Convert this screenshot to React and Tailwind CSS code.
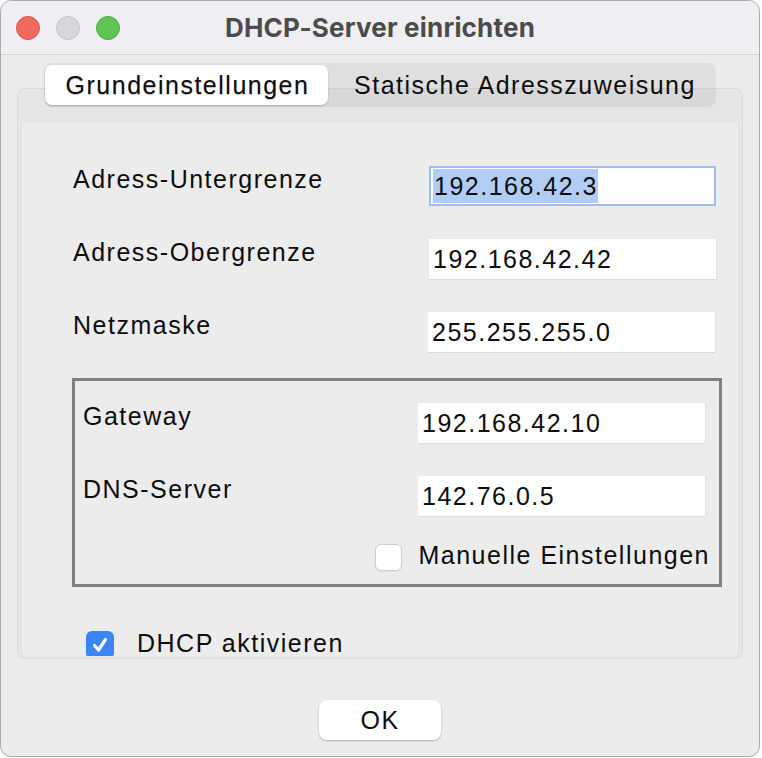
import React from "react"

const body = "font-['Liberation_Sans',Arial,sans-serif] text-[25px] leading-[28px] tracking-[1.5px] text-[#0d0d0d]"

function Light({ color }) {
    return <span className={"block h-[24px] w-[24px] rounded-full border " + color} />
}

function Field({ value, focused }) {
    return (
        <div
            className={
                "flex h-[40px] w-[287px] flex-none items-center bg-white " +
                (focused
                    ? "border-2 border-[#9ebfee] pl-[2px]"
                    : "pl-[4px] shadow-[0_1px_0_#d9d9d9,1px_0_0_#e2e2e2]")
            }
        >
            {focused ? (
                <span className="h-[34px] bg-[#b1cdf6] pl-[1px] leading-[34px]">{value}</span>
            ) : (
                <span>{value}</span>
            )}
        </div>
    )
}

function Row({ label, children, labelWidth }) {
    return (
        <div className="flex flex-none items-start">
            <div className={"-mt-[1px] " + labelWidth}>{label}</div>
            {children}
        </div>
    )
}

function Check({ checked }) {
    if (checked)
        return (
            <span className="flex h-[28px] w-[28px] flex-none items-center justify-center rounded-[6px] bg-[#3a86f6]">
                <svg width="18" height="18" viewBox="0 0 18 18">
                    <path d="M3.5 9.5 L7.5 14 L14.5 3.5" fill="none" stroke="white" strokeWidth="3.2" strokeLinecap="round" strokeLinejoin="round" />
                </svg>
            </span>
        )
    return <span className="block h-[27px] w-[27px] flex-none rounded-[6px] border border-[#cdcdcd] bg-white shadow-[0_1px_1px_rgba(0,0,0,0.06)]" />
}

export default function App() {
    return (
        <div className="h-[758px] w-[762px] bg-white">
            <div className="flex h-[757px] w-[760px] flex-col overflow-hidden rounded-[11px] border border-[#adadad] bg-[#ececec]">
                {/* title bar */}
                <div className="grid h-[54px] flex-none grid-cols-[1fr_auto_1fr] items-center border-b border-[#d4d4d4] bg-[#efeef2]">
                    <div className="flex gap-[16px] pl-[15px]">
                        <Light color="bg-[#ee6a5e] border-[#d6564b]" />
                        <Light color="bg-[#d7d6db] border-[#c3c2c7]" />
                        <Light color="bg-[#5fc453] border-[#4caa40]" />
                    </div>
                    <div className="-mt-[1px] font-['Inter',sans-serif] text-[26px] font-bold tracking-[0.2px] text-[#4b4b4b]">
                        DHCP-Server einrichten
                    </div>
                    <div />
                </div>

                {/* tabs */}
                <div className={"relative z-10 mt-[8px] flex h-[44px] w-[672px] flex-none self-center rounded-[8px] bg-black/[0.055] p-[2px] pl-[1px] " + body}>
                    <div className="flex w-[283px] items-center justify-center rounded-[7px] bg-white pl-[2px] shadow-[0_1px_2px_rgba(0,0,0,0.22)] [text-shadow:0_1px_1px_rgba(0,0,0,0.25)]">
                        Grundeinstellungen
                    </div>
                    <div className="flex flex-1 items-center justify-center pl-[8px]">Statische Adresszuweisung</div>
                </div>

                {/* pane */}
                <div className="mx-[16px] -mt-[19px] flex h-[571px] flex-none flex-col rounded-[7px] border border-[#dadada] bg-[#e5e5e5] px-[4px] pb-[2px] pt-[33px]">
                    <div className={"flex flex-1 flex-col overflow-hidden rounded-b-[5px] bg-[#ececec] pl-[51px] pt-[44px] " + body}>
                        <div className="flex flex-none flex-col gap-[33px]">
                            <Row label="Adress-Untergrenze" labelWidth="w-[356px]">
                                <Field value="192.168.42.3" focused />
                            </Row>
                            <Row label="Adress-Obergrenze" labelWidth="w-[356px]">
                                <Field value="192.168.42.42" />
                            </Row>
                            <Row label="Netzmaske" labelWidth="w-[355px]">
                                <Field value="255.255.255.0" />
                            </Row>
                        </div>

                        <div className="-ml-[1px] mt-[26px] flex h-[209px] w-[650px] flex-none flex-col border-[3px] border-[#808080] pl-[8px] pr-[13px] pt-[22px]">
                            <div className="flex flex-none flex-col gap-[33px]">
                                <Row label="Gateway" labelWidth="w-[335px]">
                                    <Field value="192.168.42.10" />
                                </Row>
                                <Row label="DNS-Server" labelWidth="w-[335px]">
                                    <Field value="142.76.0.5" />
                                </Row>
                            </div>
                            <div className="mt-[25px] flex flex-none items-start justify-end gap-[16px]">
                                <span className="mt-[3px]">
                                    <Check />
                                </span>
                                <span className="-mr-[4px]">Manuelle Einstellungen</span>
                            </div>
                        </div>

                        <div className="ml-[13px] mt-[42px] flex flex-none items-start gap-[23px]">
                            <span className="mt-[2px]">
                                <Check checked />
                            </span>
                            <span>DHCP aktivieren</span>
                        </div>
                    </div>
                </div>

                {/* footer */}
                <div className="flex flex-1 items-start justify-center pt-[41px]">
                    <div className={"flex h-[40px] w-[122px] items-center justify-center rounded-[8px] bg-white shadow-[0_1px_2px_rgba(0,0,0,0.25)] " + body}>
                        OK
                    </div>
                </div>
            </div>
        </div>
    )
}
